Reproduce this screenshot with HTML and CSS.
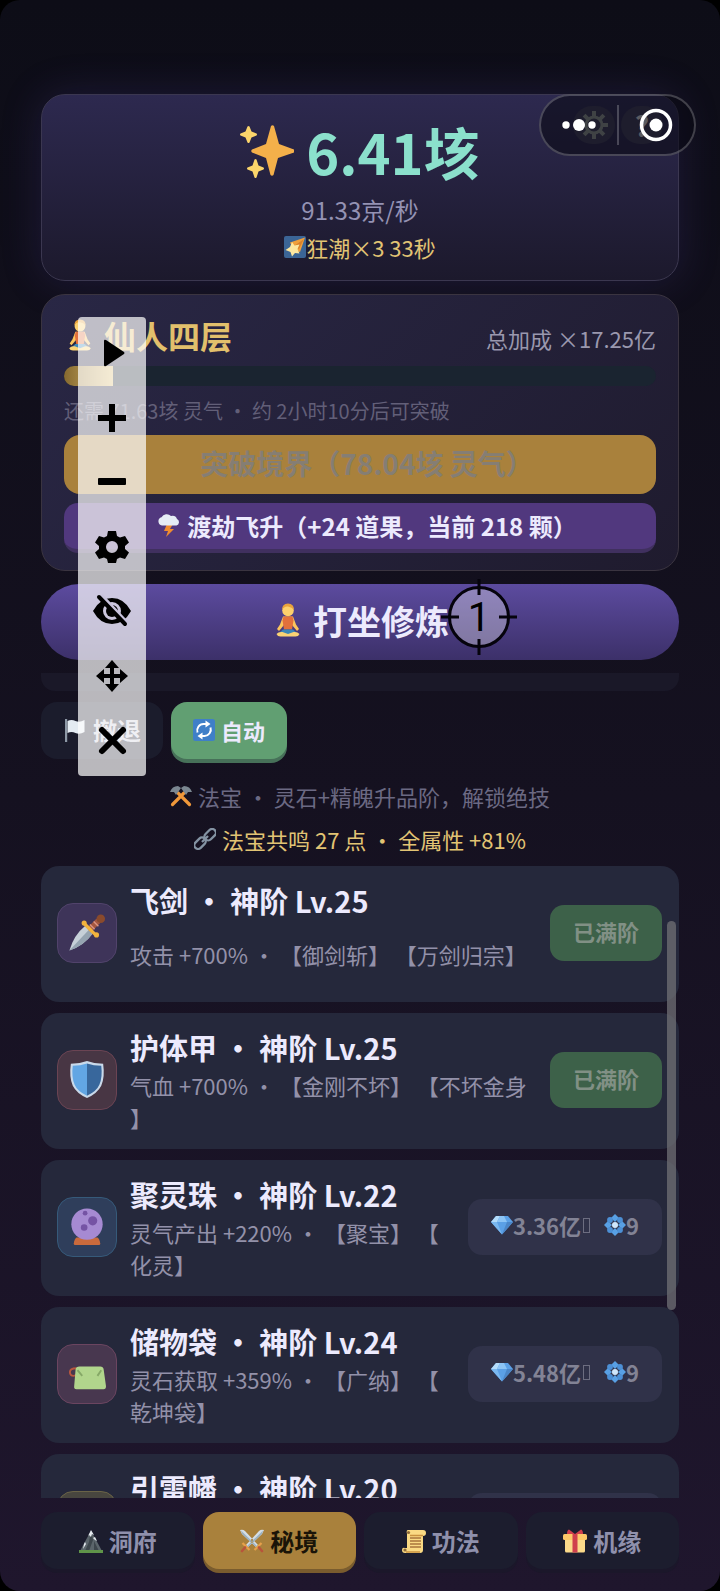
FILE: index.html
```html
<!DOCTYPE html>
<html lang="zh-CN">
<head>
    <meta charset="UTF-8">
    <meta name="viewport" content="width=device-width, initial-scale=1.0">
    <title>修仙</title>
    <link rel="stylesheet" href="styles.css">
</head>
<body>
    <!-- icon sprites -->
    <svg class="sprites" aria-hidden="true">
        <symbol id="i-sparkles" viewBox="0 0 54 54">
            <path fill="#f4b04a" d="M31 2q1.500-1.500 3 0l5 18 15 5.500q1.500 1.500 0 3L38 34l-4.500 17q-1.500 1.500-3 0L26 34l-14-5.500q-1.500-1.500 0-3L26 20z"/>
            <path fill="#fbd56b" d="M7.500 2.500q1-1 2 0l2 5 5 2q1 1 0 2l-5 2-2 5q-1 1-2 0l-2-5-5-2q-1-1 0-2l5-2zM14.500 35.500q1-1 2 0l2 6 5 2q1 1 0 2l-5 2-2 6q-1 1-2 0l-2-6-5-2q-1-1 0-2l5-2z"/>
        </symbol>
        <symbol id="i-comet" viewBox="0 0 22 22">
            <rect width="22" height="22" rx="2" fill="#3b6596"/>
            <path fill="#f0a03c" d="M6 6.500 21 1.500 16 16l-6-2z"/>
            <path fill="#d9812b" d="M10 10 20 3l-5 10z"/>
            <path fill="#fde7a0" d="m8 6 2.500 3.500 5-1-2 4.500 2 4.500-4.500-.5L8 20.500l-1.500-4.500L1.500 14 6 11z"/>
        </symbol>
        <symbol id="i-lotus" viewBox="0 0 34 34">
            <path fill="#fbc45c" d="M12 13.500h10l3 8 3 4.500-2 2-5-6-1-4h-6l-1 4-5 6-2-2 3-4.500z"/>
            <circle cx="17" cy="7.500" r="5.800" fill="#fcd06c"/>
            <path fill="#e8a23c" d="M11 7q0-6.500 6-6.500T23 7q-2-3-6-3.500T11 7z"/>
            <path fill="#e2703c" d="M12.500 13.500h9l1 4-1.500 9h-8l-1.500-9z"/>
            <path fill="#3b87b8" d="M12 26.500h10l4 3.500-9 3-9-3z"/>
            <path fill="#fbd374" d="M5.500 31q2-2.500 6-2l5.500 2 5.500-2q4-.5 6 2-1 2.500-4 2.500h-15q-3 0-4-2.500z"/>
        </symbol>
        <symbol id="i-storm" viewBox="0 0 24 24">
            <path fill="#f08c2e" d="m10 11-3 7h4l-2 6 8-8h-4l3-5z"/>
            <path fill="#e6edf5" d="M5 12.500a4.200 4.200 0 0 1-.5-8.200A6 6 0 0 1 14 3a5 5 0 0 1 6 3 3.500 3.500 0 0 1-.5 6.500z"/>
        </symbol>
        <symbol id="i-flag" viewBox="0 0 22 24">
            <rect x="1" y="1" width="2.200" height="23" fill="#8d98a6"/>
            <path fill="#e4ebf2" d="M3.500 3q4-2 8 0t9-1v12q-5 3-9 1t-8 0z"/>
        </symbol>
        <symbol id="i-repeat" viewBox="0 0 22 22">
            <rect width="22" height="22" rx="2.500" fill="#3f7fc8"/>
            <path fill="none" stroke="#fff" stroke-width="2" d="M4.500 13.500a6.500 6.500 0 0 1 6-8.500H14M17.500 8.500a6.500 6.500 0 0 1-6 8.500H8"/>
            <path fill="#fff" d="m12.500 1.500 5 3.500-5 3.500zM9.500 13.500l-5 3.500 5 3.500z"/>
        </symbol>
        <symbol id="i-hammers" viewBox="0 0 22 22">
            <path stroke="#f0983a" stroke-width="3.200" stroke-linecap="round" d="M8 8 19.500 19.500M14 8 2.500 19.500"/>
            <path fill="#7b8791" d="M0 7q2-6 8-6l3 2-5 7-2-3zM22 7q-2-6-8-6l-3 2 5 7 2-3z"/>
        </symbol>
        <symbol id="i-link" viewBox="0 0 22 22">
            <g fill="none" stroke="#8493a3" stroke-width="2.300">
                <rect x="9.500" y="3" width="13" height="7.500" rx="3.700" transform="rotate(-45 16 6.500)"/>
                <rect x="-.5" y="11.500" width="13" height="7.500" rx="3.700" transform="rotate(-45 6 15.200)"/>
                <path d="m8 14 6-6"/>
            </g>
        </symbol>
        <symbol id="i-dagger" viewBox="0 0 40 40">
            <path fill="#c6d0d8" d="M1.500 38.500Q6 22 18 12.500l8 8Q17 33 1.500 38.500z"/>
            <path fill="#95a4b1" d="M1.500 38.500 22 16.500l4 4Q17 33 1.500 38.500z"/>
            <path stroke="#a4563f" stroke-width="6" d="m22 17 10-10"/>
            <path stroke="#d99484" stroke-width="1.500" d="m23 11 5 5M27 8l5 5"/>
            <circle cx="34.500" cy="5" r="4.500" fill="#8a4a2c"/>
            <path fill="none" stroke="#f2b33d" stroke-width="3.500" stroke-linecap="round" d="m17 10 12 12"/>
            <circle cx="17" cy="9.500" r="2.700" fill="#f2b33d"/>
            <circle cx="30" cy="22" r="2.700" fill="#f2b33d"/>
        </symbol>
        <symbol id="i-shield" viewBox="0 0 40 40">
            <path fill="#c9d9ea" d="M20 0q8 3 17 3 2 14-2 23-4 8-15 13Q9 34 5 26 1 17 3 3q9 0 17-3z"/>
            <path fill="#62a6e4" d="M20 2.500v34Q10 32 7 25 3.500 17 5 5q8 0 15-2.500z"/>
            <path fill="#38679c" d="M20 2.500v34Q30 32 33 25q3.500-8 2-20-8 0-15-2.500z"/>
        </symbol>
        <symbol id="i-orb" viewBox="0 0 40 40">
            <path fill="#c96a3c" d="M9 31h22q2 1 3 6.500 0 1.500-1.500 1.500h-25Q6 39 6 37.500 7 32 9 31z"/>
            <circle cx="20" cy="17" r="16.500" fill="#a68ad2"/>
            <circle cx="26" cy="13.500" r="4.800" fill="#7553a4"/>
            <circle cx="17" cy="20.500" r="3.500" fill="#7553a4"/>
            <circle cx="18" cy="5.500" r="2.500" fill="#7553a4"/>
        </symbol>
        <symbol id="i-pouch" viewBox="0 0 40 40">
            <path fill="none" stroke="#b8573f" stroke-width="2" d="M9 14q-7 0-7 4t4 4 5-6"/>
            <path fill="#b1d58c" d="M12 12h22q3 0 3.500 3L40 33q0 3-2.500 3H9q-3 0-2.500-3L8 15q.5-3 4-3z"/>
            <path stroke="#86a867" stroke-width="2" d="m10 16 5 6M35 16l-4 6"/>
        </symbol>
        <symbol id="i-gem" viewBox="0 0 22 22">
            <path fill="#5ba0e6" d="M5 2h12l5 6-11 12.500L0 8z"/>
            <path fill="#b3dcfa" d="M5 2h4L6 8H0z"/>
            <path fill="#8cc4f5" d="M9 2h4l3 6H6z"/>
            <path fill="#4b86c8" d="M16 8h6L11 20.500z"/>
            <path fill="#7ab8f0" d="M0 8h6l5 12.500z"/>
        </symbol>
        <symbol id="i-diamond" viewBox="0 0 22 22">
            <path fill="#58a0e4" d="m11 0 4 4-4 4-4-4zM11 14l4 4-4 4-4-4zM0 11l4-4 4 4-4 4zM14 11l4-4 4 4-4 4z"/>
            <circle cx="6" cy="6" r="2.900" fill="#4c90d6"/>
            <circle cx="16" cy="6" r="2.900" fill="#4c90d6"/>
            <circle cx="6" cy="16" r="2.900" fill="#4c90d6"/>
            <circle cx="16" cy="16" r="2.900" fill="#4c90d6"/>
            <circle cx="11" cy="11" r="3" fill="#cfe6fa"/>
        </symbol>
        <symbol id="i-mountain" viewBox="0 0 24 24">
            <path fill="#5b656b" d="M1 22 8 9l4-7 4 7 7 13z"/>
            <path fill="#3d464c" d="m12 2 2 9-4 11h-4l4-9zM15 12l5 10h-5z"/>
            <path fill="#e4e9ee" d="m12 1 3 5-2-1-1 3-2-2-1 1zM14 9l2-1 2 4-2-1zM5 15l1-2 1 2-3 5z"/>
            <rect y="21" width="24" height="3" fill="#5f9449"/>
        </symbol>
        <symbol id="i-swords" viewBox="0 0 24 24">
            <path fill="#d4dee6" d="M0 1q3-1 5 1l13 14-2 2L2 5zM24 1q-3-1-5 1L6 16l2 2L22 5z"/>
            <path fill="#9cb2c2" d="M1 1.500 17 17l-1 1L2 5zM23 1.500 7 17l1 1L22 5z"/>
            <path stroke="#e7a04a" stroke-width="2.200" d="m2.500 14 7 7M21.500 14l-7 7"/>
            <path stroke="#b8543c" stroke-width="2.600" stroke-linecap="round" d="m5 18.500-3 3.500M19 18.500l3 3.500"/>
        </symbol>
        <symbol id="i-scroll" viewBox="0 0 24 24">
            <path fill="#fad983" d="M6 1h15q3 0 3 3t-3 3v14q0 3-3 3H3q-3 0-3-3t3-2h2V5q-1-4 1-4z"/>
            <path stroke="#a9743d" stroke-width="1.300" d="M8 9h11M8 12h11M8 15h11M8 18h11"/>
            <path stroke="#c9913f" stroke-width="1.300" d="M8 6.500h13M4 23h14"/>
            <circle cx="6.500" cy="3.500" r="1.600" fill="#8d6a3a"/>
            <circle cx="3" cy="21" r="1.600" fill="#8d6a3a"/>
        </symbol>
        <symbol id="i-gift" viewBox="0 0 24 24">
            <path fill="#fbd98a" d="M2 10h20v12q0 1.500-1.500 1.500h-17Q2 23.500 2 22z"/>
            <rect y="5" width="24" height="6" rx="1.500" fill="#fdc868"/>
            <path fill="#cf3f4d" d="M9.500 5h5v18.500h-5zM12 5 6 .5Q4 1 4 5zM12 5l6-4.500Q20 1 20 5z"/>
        </symbol>
        <symbol id="i-gear" viewBox="0 0 28 28">
            <circle cx="14" cy="14" r="8" fill="none" stroke="currentColor" stroke-width="3"/>
            <path stroke="currentColor" stroke-width="4" d="M14 0v6M14 22v6M0 14h6M22 14h6M4.100 4.100l4.200 4.200M19.700 19.700l4.200 4.200M4.100 23.900l4.200-4.200M19.700 8.300l4.200-4.200"/>
        </symbol>
    </svg>

    <div class="app">
        <header class="card summary">
            <div class="summary-tools">
                <button class="tool" type="button" aria-label="设置"><svg class="tool-icon"><use href="#i-gear"/></svg></button>
                <button class="tool" type="button">?</button>
            </div>
            <div class="total"><svg class="total-icon"><use href="#i-sparkles"/></svg>6.41垓</div>
            <div class="rate">91.33京/秒</div>
            <div class="buff"><svg class="em"><use href="#i-comet"/></svg>狂潮×3 33秒</div>
        </header>

        <section class="card realm">
            <div class="realm-head">
                <h1 class="realm-name"><svg class="em"><use href="#i-lotus"/></svg>仙人四层</h1>
                <span class="realm-bonus">总加成 ×17.25亿</span>
            </div>
            <div class="progress"><div class="progress-fill" style="width: 8.2%"></div></div>
            <p class="realm-hint">还需 71.63垓 灵气 ・ 约 2小时10分后可突破</p>
            <button class="btn-break" type="button" disabled>突破境界（78.04垓 灵气）</button>
            <button class="btn-ascend" type="button"><svg class="em"><use href="#i-storm"/></svg>渡劫飞升（+24 道果，当前 218 颗）</button>
        </section>

        <button class="btn-meditate" type="button"><svg class="em"><use href="#i-lotus"/></svg>打坐修炼</button>

        <section class="battle">
            <div class="battle-log"></div>
            <div class="battle-actions">
                <button class="btn-retreat" type="button"><svg class="em"><use href="#i-flag"/></svg>撤退</button>
                <button class="btn-auto" type="button"><svg class="em"><use href="#i-repeat"/></svg>自动</button>
            </div>
            <p class="tip"><svg class="em"><use href="#i-hammers"/></svg>法宝 ・ 灵石+精魄升品阶，解锁绝技</p>
            <p class="tip tip-gold"><svg class="em"><use href="#i-link"/></svg>法宝共鸣 27 点 ・ 全属性 +81%</p>
        </section>

        <div class="list-wrap">
            <ul class="list">
                <li class="item">
                    <span class="tile tile-purple"><svg class="tile-icon"><use href="#i-dagger"/></svg></span>
                    <div class="item-text">
                        <h2 class="item-name">飞剑 ・ 神阶 Lv.25</h2>
                        <div class="item-desc"><p>攻击 +700% ・ 【御剑斩】 【万剑归宗】</p></div>
                    </div>
                    <button class="btn-up btn-full" type="button" disabled>已满阶</button>
                </li>
                <li class="item">
                    <span class="tile tile-red"><svg class="tile-icon"><use href="#i-shield"/></svg></span>
                    <div class="item-text">
                        <h2 class="item-name">护体甲 ・ 神阶 Lv.25</h2>
                        <div class="item-desc"><p>气血 +700% ・ 【金刚不坏】 【不坏金身】</p></div>
                    </div>
                    <button class="btn-up btn-full" type="button" disabled>已满阶</button>
                </li>
                <li class="item">
                    <span class="tile tile-blue"><svg class="tile-icon"><use href="#i-orb"/></svg></span>
                    <div class="item-text">
                        <h2 class="item-name">聚灵珠 ・ 神阶 Lv.22</h2>
                        <div class="item-desc"><p>灵气产出 +220% ・ 【聚宝】 【化灵】</p></div>
                    </div>
                    <button class="btn-up" type="button" disabled><svg class="em"><use href="#i-gem"/></svg>3.36亿<i class="tofu"></i><svg class="em"><use href="#i-diamond"/></svg>9</button>
                </li>
                <li class="item">
                    <span class="tile tile-pink"><svg class="tile-icon"><use href="#i-pouch"/></svg></span>
                    <div class="item-text">
                        <h2 class="item-name">储物袋 ・ 神阶 Lv.24</h2>
                        <div class="item-desc"><p>灵石获取 +359% ・ 【广纳】 【乾坤袋】</p></div>
                    </div>
                    <button class="btn-up" type="button" disabled><svg class="em"><use href="#i-gem"/></svg>5.48亿<i class="tofu"></i><svg class="em"><use href="#i-diamond"/></svg>9</button>
                </li>
                <li class="item">
                    <span class="tile tile-gold"></span>
                    <div class="item-text">
                        <h2 class="item-name">引雷幡 ・ 神阶 Lv.20</h2>
                        <div class="item-desc"></div>
                    </div>
                    <button class="btn-up btn-wide" type="button" disabled aria-label="升阶"></button>
                </li>
            </ul>
            <div class="scrollbar"></div>
        </div>

        <nav class="tabs">
            <button class="tab" type="button"><svg class="em"><use href="#i-mountain"/></svg>洞府</button>
            <button class="tab active" type="button"><svg class="em"><use href="#i-swords"/></svg>秘境</button>
            <button class="tab" type="button"><svg class="em"><use href="#i-scroll"/></svg>功法</button>
            <button class="tab" type="button"><svg class="em"><use href="#i-gift"/></svg>机缘</button>
        </nav>
    </div>

    <!-- mini program capsule -->
    <div class="capsule">
        <button class="capsule-btn" type="button" aria-label="更多">
            <svg width="36" height="36" viewBox="0 0 36 36" fill="#fff"><circle cx="5" cy="18" r="3.700"/><circle cx="18" cy="18" r="6"/><circle cx="31" cy="18" r="3.700"/></svg>
        </button>
        <button class="capsule-btn capsule-close" type="button" aria-label="关闭">
            <svg width="36" height="36" viewBox="0 0 36 36"><circle cx="18" cy="18" r="14.500" fill="none" stroke="#fff" stroke-width="3.500"/><circle cx="18" cy="18" r="6.500" fill="#fff"/></svg>
        </button>
    </div>

    <!-- auto clicker toolbar -->
    <div class="clicker">
        <button class="clicker-btn" type="button" aria-label="开始"><svg viewBox="0 0 40 40"><path d="M12 8q0-2 2-1l18 12q1 1 0 2L14 33q-2 1-2-1z"/></svg></button>
        <button class="clicker-btn" type="button" aria-label="添加"><svg viewBox="0 0 40 40"><path d="M17 6h6v11h11v6H23v11h-6V23H6v-6h11z"/></svg></button>
        <button class="clicker-btn" type="button" aria-label="减少"><svg viewBox="0 0 40 40"><rect x="6" y="16" width="28" height="7" rx="1"/></svg></button>
        <button class="clicker-btn" type="button" aria-label="设置"><svg viewBox="0 0 40 40"><path fill-rule="evenodd" d="M16 4h8l1 5 3 1.500 5-1.500 4 6.500-4 3.500v3l4 3.500-4 6.500-5-1.500-3 1.500-1 4h-8l-1-4-3-1.500-5 1.500-4-6.500L7 22v-3l-4-3.500L7 9l5 1.500L15 9zM20 14a6 6 0 1 0 0 12 6 6 0 0 0 0-12z"/></svg></button>
        <button class="clicker-btn" type="button" aria-label="隐藏"><svg viewBox="0 0 40 40"><path fill-rule="evenodd" d="M1 20Q8 7 20 7t19 13q-7 13-19 13T1 20zm19-9a9 9 0 1 0 0 18 9 9 0 0 0 0-18z"/><circle cx="20" cy="20" r="6"/><path class="eye-gap" d="m9 4 26 28"/><path class="eye-slash" d="m7 6 26 27"/></svg></button>
        <button class="clicker-btn" type="button" aria-label="移动"><svg viewBox="0 0 40 40"><path d="m20 4 7 8h-5v6h6v-5l8 7-8 7v-5h-6v6h5l-7 8-7-8h5v-6h-6v5l-8-7 8-7v5h6v-6h-5z"/></svg></button>
        <button class="clicker-btn" type="button" aria-label="退出"><svg viewBox="0 0 40 40"><path class="cross" d="m10 10 21 21M31 10 10 31"/></svg></button>
    </div>

    <!-- click target -->
    <div class="target">
        <svg class="target-ring" viewBox="0 0 78 78"><circle cx="39" cy="39" r="29.500"/><path d="M39 1v16M39 61v16M1 39h18M59 39h18"/></svg>
        <span class="target-num">1</span>
    </div>
</body>
</html>
```

FILE: styles.css
```css
* {
    box-sizing: border-box;
}
body {
    margin: 0;
    background: #000;
    color: #eceafd;
    font-family: "Noto Sans CJK SC", sans-serif;
    font-size: 22px;
    text-spacing-trim: space-all;
}
h1, h2, p, ul {
    margin: 0;
    padding: 0;
}
button {
    border: none;
    padding: 0;
    font-family: inherit;
    font-size: 24px;
    font-weight: 700;
    color: inherit;
    cursor: pointer;
}
.sprites {
    position: absolute;
    width: 0;
    height: 0;
}
.em {
    width: 1em;
    height: 1em;
    flex: none;
}
.app {
    display: flex;
    flex-direction: column;
    height: 100vh;
    padding: 94px 41px 22px;
    border-radius: 20px;
    background: linear-gradient(#0d0d17, #151120 50%, #1f162d);
}

/* summary */
.card {
    position: relative;
    border: 1px solid #3b3750;
    border-radius: 24px;
    margin-bottom: 13px;
}
.summary {
    padding: 20px 22px 16px;
    background: linear-gradient(#2d294f, #1c192c);
    box-shadow: 0 0 40px rgba(88, 68, 170, 0.22);
    text-align: center;
}
.summary-tools {
    position: absolute;
    top: 11px;
    right: 15px;
    display: flex;
    gap: 6px;
}
.tool {
    display: flex;
    align-items: center;
    justify-content: center;
    width: 42px;
    height: 38px;
    border-radius: 19px;
    background: #3a3850;
    font-size: 28px;
    color: #c0c0c4;
}
.tool-icon {
    width: 28px;
    height: 28px;
    color: #838b84;
}
.total {
    display: flex;
    align-items: center;
    justify-content: center;
    gap: 12px;
    font-size: 56px;
    line-height: 72px;
    font-weight: 700;
    color: #8be0cc;
}
.total-icon {
    width: 54px;
    height: 54px;
}
.rate {
    margin-top: 5px;
    font-size: 24px;
    line-height: 36px;
    color: #9492b3;
}
.buff {
    display: flex;
    align-items: center;
    justify-content: center;
    margin-top: 2px;
    line-height: 34px;
    color: #e2c474;
}

/* realm */
.realm {
    padding: 18px 22px 17px;
    border-color: #3a3440;
    background: linear-gradient(135deg, #292745, #1f1b2e);
}
.realm-head {
    display: flex;
    align-items: center;
    justify-content: space-between;
}
.realm-name {
    display: flex;
    align-items: center;
    gap: 8px;
    font-size: 32px;
    line-height: 44px;
    color: #e2c06c;
}
.realm-bonus {
    padding-top: 6px;
    color: #9a98ae;
}
.progress {
    height: 20px;
    margin-top: 9px;
    border-radius: 10px;
    overflow: hidden;
    background: #1a2430;
}
.progress-fill {
    height: 100%;
    background: linear-gradient(90deg, #86692f, #dcbd70);
}
.realm-hint {
    margin-top: 10px;
    font-size: 20px;
    line-height: 30px;
    color: #625f78;
}
.btn-break,
.btn-ascend {
    display: flex;
    align-items: center;
    justify-content: center;
    gap: 6px;
    width: 100%;
    padding-left: 14px;
}
.btn-break {
    height: 59px;
    margin-top: 9px;
    padding-bottom: 4px;
    border-radius: 16px;
    background: #a9813c;
    font-size: 28px;
    color: #857e74;
}
.btn-ascend {
    height: 50px;
    margin-top: 9px;
    padding-bottom: 2px;
    border-radius: 14px;
    border-bottom: 4px solid #40305f;
    background: #51387e;
}
.btn-meditate {
    display: flex;
    align-items: center;
    justify-content: center;
    gap: 8px;
    height: 76px;
    flex: none;
    margin-bottom: 13px;
    padding-bottom: 4px;
    border-radius: 38px;
    background: linear-gradient(#5c4b9f, #3c3069);
    font-size: 34px;
}

/* battle */
.battle-log {
    height: 18px;
    border-radius: 0 0 14px 14px;
    background: #1a1828;
}
.battle-actions {
    display: flex;
    gap: 8px;
    margin: 11px 0 22px;
}
.btn-retreat,
.btn-auto {
    display: flex;
    align-items: center;
    gap: 6px;
    height: 57px;
    padding: 0 22px 2px;
    border-radius: 16px;
}
.btn-retreat {
    background: #1b1c2c;
    color: #c9c8d8;
}
.btn-auto {
    background: #619f72;
    box-shadow: 0 4px 0 #477159;
    font-size: 22px;
}
.tip {
    display: flex;
    align-items: center;
    justify-content: center;
    gap: 6px;
    margin-bottom: 13px;
    line-height: 30px;
    color: #6b6983;
}
.tip-gold {
    margin-bottom: 12px;
    color: #e2c474;
}

/* treasure list */
.list-wrap {
    position: relative;
    flex: 1;
    min-height: 0;
    overflow: hidden;
}
.list {
    display: flex;
    flex-direction: column;
    gap: 11px;
    list-style: none;
}
.item {
    display: flex;
    align-items: center;
    gap: 13px;
    padding: 14px 17px 16px 16px;
    border-radius: 18px;
    background: #25283b;
}
.item-text {
    flex: 1;
    min-width: 0;
}
.item-name {
    font-size: 29px;
    line-height: 40px;
}
.item-desc {
    display: flex;
    align-items: center;
    height: 64px;
    margin-top: 2px;
    line-height: 32px;
    line-break: anywhere;
    color: #9391a9;
}
.tile {
    display: flex;
    align-items: center;
    justify-content: center;
    flex: none;
    width: 60px;
    height: 60px;
    border: 1px solid;
    border-radius: 16px;
}
.tile-icon {
    width: 38px;
    height: 38px;
}
.tile-purple {
    background: #3e3459;
    border-color: #51436b;
}
.tile-red {
    background: #483644;
    border-color: #6b4453;
}
.tile-blue {
    background: #2f3e5b;
    border-color: #365a7a;
}
.tile-pink {
    background: #48374f;
    border-color: #6b4560;
}
.tile-gold {
    background: #48463f;
    border-color: #6a6347;
}
.btn-up {
    display: flex;
    align-items: center;
    flex: none;
    height: 56px;
    padding: 0 23px 5px;
    border-radius: 14px;
    background: #303249;
    color: #828395;
    font-size: 22px;
}
.btn-full {
    background: #3d6149;
    color: #819085;
}
.btn-wide {
    width: 194px;
}
.tofu {
    width: 7px;
    height: 15px;
    margin: 2px 14px 0 2px;
    border: 1px solid #6c6d80;
}
.scrollbar {
    position: absolute;
    top: 55px;
    right: 3px;
    width: 9px;
    height: 389px;
    border-radius: 5px;
    background: rgba(112, 112, 118, 0.75);
}

/* bottom tabs */
.tabs {
    display: grid;
    grid-template-columns: repeat(4, 1fr);
    gap: 8px;
    margin-top: 14px;
}
.tab {
    display: flex;
    align-items: center;
    justify-content: center;
    gap: 6px;
    height: 57px;
    border-radius: 16px;
    background: #1c1d2e;
    box-shadow: 0 4px 0 #1b172a;
    color: #8f90ac;
}
.tab.active {
    background: #a9813c;
    box-shadow: 0 4px 0 #7a5c2e;
    color: #1a1408;
}

/* floating overlays */
.capsule {
    position: absolute;
    top: 94px;
    right: 24px;
    display: flex;
    align-items: center;
    width: 157px;
    height: 62px;
    border: 2px solid rgba(255, 255, 255, 0.22);
    border-radius: 31px;
    background: rgba(8, 7, 16, 0.55);
}
.capsule-btn {
    display: flex;
    align-items: center;
    justify-content: center;
    flex: 1;
    height: 40px;
    background: none;
}
.capsule-close {
    border-left: 2px solid rgba(255, 255, 255, 0.22);
}
.clicker {
    position: absolute;
    top: 317px;
    left: 78px;
    display: flex;
    flex-direction: column;
    justify-content: space-between;
    width: 68px;
    height: 459px;
    padding: 16px 0;
    border-radius: 4px;
    background: rgba(255, 255, 255, 0.7);
}
.clicker-btn {
    height: 40px;
    background: none;
}
.clicker-btn svg {
    width: 40px;
    height: 40px;
}
.eye-gap {
    stroke: #c8c3dc;
    stroke-width: 4;
}
.eye-slash {
    stroke: #000;
    stroke-width: 4;
    stroke-linecap: round;
}
.cross {
    stroke: #000;
    stroke-width: 6;
    stroke-linecap: round;
}
.target {
    position: absolute;
    top: 578px;
    left: 440px;
    display: flex;
    align-items: center;
    justify-content: center;
    width: 78px;
    height: 78px;
}
.target-ring {
    position: absolute;
    inset: 0;
    fill: rgba(255, 255, 255, 0.33);
    stroke: #05030c;
    stroke-width: 3;
}
.target-num {
    position: relative;
    font-family: Roboto, sans-serif;
    font-size: 40px;
    color: #000;
}
```
